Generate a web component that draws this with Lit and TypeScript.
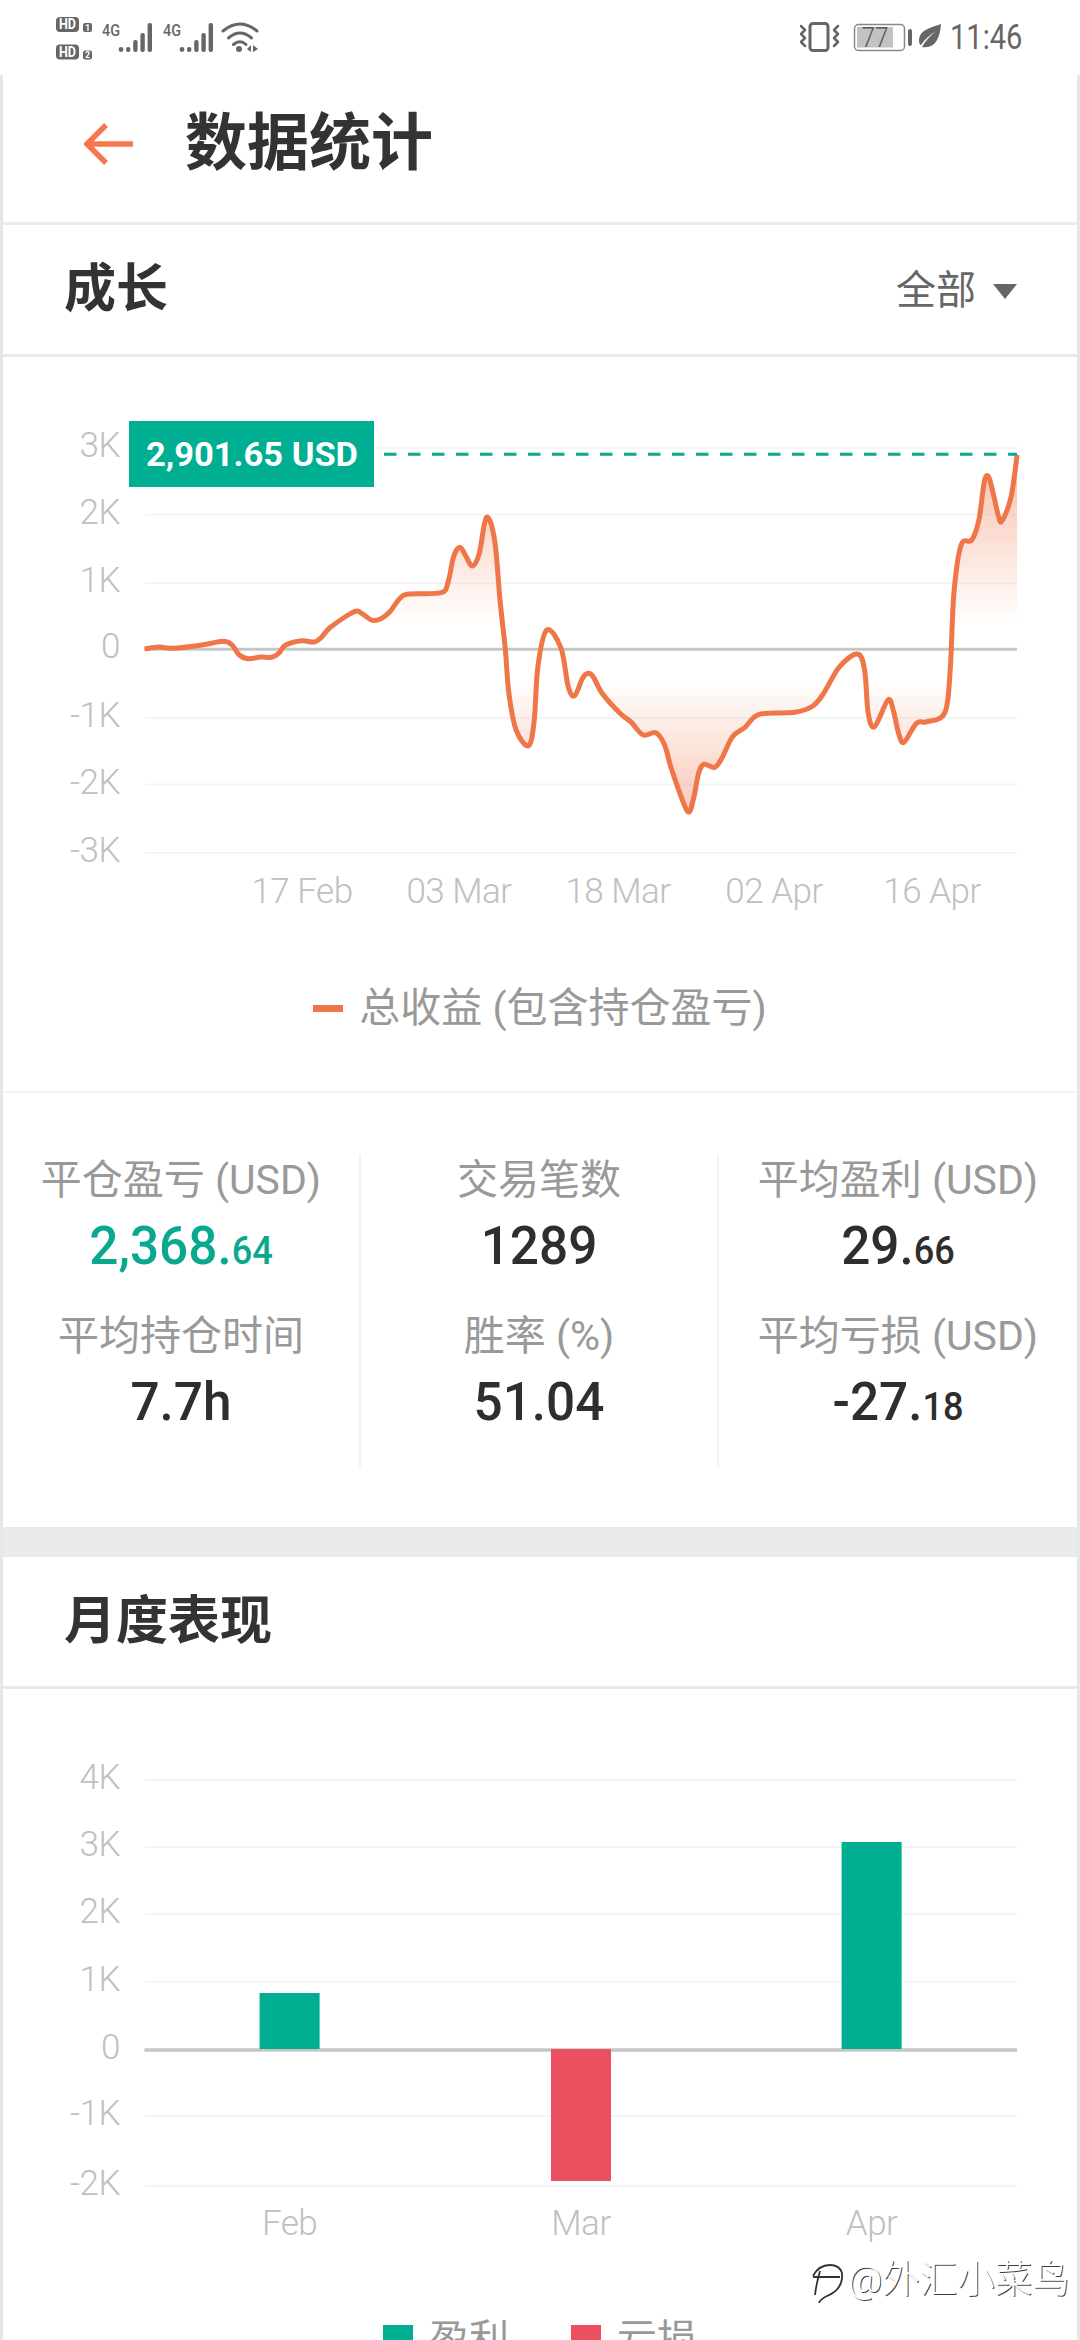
import { css, html, LitElement, svg } from "lit";
import { customElement } from "lit/decorators.js";

const ORANGE = "#ee7649";
const GREEN = "#00ae91";
const RED = "#ec4f60";

// curve samples, read off the two zoomed crops of the chart
const LEFT: number[][] = [
  [405, 747], [445, 741], [485, 745], [560, 736], [625, 724], [650, 735], [670, 765], [695, 776],
  [730, 771], [760, 772], [780, 760], [800, 735], [845, 722], [880, 726], [900, 712], [925, 682],
  [990, 636], [1010, 638], [1040, 660], [1065, 657], [1090, 637], [1120, 595], [1145, 582], [1235, 578],
  [1255, 545], [1270, 470], [1288, 442], [1305, 470], [1323, 498], [1342, 460], [1362, 352], [1385, 420],
  [1400, 600], [1415, 750], [1425, 880], [1445, 990], [1480, 1037],
];
const RIGHT: number[][] = [
  [40, 960], [50, 800], [75, 690], [115, 745], [135, 860], [153, 887], [175, 835], [190, 820],
  [205, 830], [230, 880], [280, 940], [310, 965], [345, 1005], [380, 998], [405, 1035], [425, 1110],
  [468, 1232], [485, 1200], [500, 1120], [515, 1093], [545, 1102], [565, 1075], [595, 1010], [630, 982],
  [670, 943], [770, 937], [820, 918], [850, 880], [895, 800], [945, 762], [965, 810], [975, 940],
  [993, 980], [1030, 900], [1045, 930], [1060, 1000], [1075, 1027], [1110, 970], [1140, 965], [1190, 937],
  [1205, 800], [1215, 580], [1235, 435], [1265, 420], [1285, 360], [1300, 245], [1312, 230], [1325, 280],
  [1340, 350], [1350, 362], [1375, 290], [1392, 165],
];
const CURVE = [
  ...LEFT.map(([x, y]) => [x / 2.8, y / 3 + 400]),
  ...RIGHT.map(([x, y]) => [x / 2.8 + 520, y / 3 + 400]),
];

function smooth(pts: number[][]): string {
  let d = `M${pts[0][0].toFixed(1)} ${pts[0][1].toFixed(1)}`;
  for (let i = 0; i < pts.length - 1; i++) {
    const p0 = pts[i - 1] || pts[i];
    const p1 = pts[i];
    const p2 = pts[i + 1];
    const p3 = pts[i + 2] || p2;
    const c1x = p1[0] + (p2[0] - p0[0]) / 6;
    const c1y = p1[1] + (p2[1] - p0[1]) / 6;
    const c2x = p2[0] - (p3[0] - p1[0]) / 6;
    const c2y = p2[1] - (p3[1] - p1[1]) / 6;
    d += `C${c1x.toFixed(1)} ${c1y.toFixed(1)} ${c2x.toFixed(1)} ${c2y.toFixed(1)} ${p2[0].toFixed(1)} ${p2[1].toFixed(1)}`;
  }
  return d;
}

const GROWTH_TICKS: [string, number][] = [
  ["3K", 447.7], ["2K", 514.5], ["1K", 583], ["0", 649.3], ["-1K", 718], ["-2K", 784.5], ["-3K", 853],
];
const GROWTH_DATES: [string, number][] = [
  ["17 Feb", 302], ["03 Mar", 459], ["18 Mar", 618], ["02 Apr", 774], ["16 Apr", 932],
];
const MONTH_TICKS: [string, number][] = [
  ["4K", 1780], ["3K", 1847], ["2K", 1914], ["1K", 1981.7], ["0", 2050], ["-1K", 2116], ["-2K", 2185.7],
];
const MONTHS = [
  { name: "Feb", x: 259.6, top: 1993, bottom: 2049, color: GREEN },
  { name: "Mar", x: 551, top: 2049, bottom: 2181, color: RED },
  { name: "Apr", x: 841.6, top: 1842, bottom: 2049, color: GREEN },
];

interface Stat {
  label: string;
  value: string;
  cents?: string;
  green?: boolean;
}

const STATS: Stat[][] = [
  [
    { label: "平仓盈亏 (USD)", value: "2,368.", cents: "64", green: true },
    { label: "平均持仓时间", value: "7.7h" },
  ],
  [
    { label: "交易笔数", value: "1289" },
    { label: "胜率 (%)", value: "51.04" },
  ],
  [
    { label: "平均盈利 (USD)", value: "29.", cents: "66" },
    { label: "平均亏损 (USD)", value: "-27.", cents: "18" },
  ],
];

function signal(x: number) {
  const tops = [47, 40, 33, 23];
  return svg`
    <circle cx=${x} cy="49.5" r="2.4" fill="#666"></circle>
    ${tops.map(
      (t, i) => svg`<rect x=${x + 5 + i * 7.2} y=${t} width="4.4" height=${52 - t} rx="2" fill="#666"></rect>`
    )}
  `;
}

function hdBadge(y: number, n: string) {
  return svg`
    <rect x="56" y=${y} width="23" height="15" rx="4" fill="#666"></rect>
    <text class="hd" x="67.5" y=${y + 12} text-anchor="middle" textLength="17" lengthAdjust="spacingAndGlyphs">HD</text>
    <rect x="83" y=${y + 6} width="9" height="9" rx="2" fill="#666"></rect>
    <text class="hd small" x="87.5" y=${y + 13.5} text-anchor="middle">${n}</text>
  `;
}

@customElement("app-root")
export class AppRoot extends LitElement {
  static styles = css`
    :host {
      display: block;
      position: relative;
      width: 1080px;
      height: 2340px;
      overflow: hidden;
      background: #fff;
      color: #333;
      font-family: Roboto, "Noto Sans CJK SC", sans-serif;
    }
    svg {
      display: block;
    }
    .status {
      height: 75px;
      display: flex;
      justify-content: space-between;
      align-items: flex-start;
      padding: 10px 58px 0 50px;
      box-sizing: border-box;
    }
    .status-right {
      display: flex;
      align-items: flex-start;
      margin-top: 5px;
    }
    .time {
      width: 72px;
      margin-left: 5px;
      font-size: 35px;
      line-height: 45px;
      color: #666;
      white-space: nowrap;
      transform-origin: left center;
      transform: scaleX(0.83);
    }
    .page {
      border-left: 3px solid #e6e6e6;
      border-right: 3px solid #e6e6e6;
    }
    .appbar {
      height: 137px;
      display: flex;
      align-items: center;
      padding: 0 0 10px 81px;
      border-bottom: 3px solid #ebebeb;
    }
    .appbar h1 {
      margin: 0 0 0 51px;
      font-size: 62px;
      line-height: 1;
      font-weight: 700;
      color: #333;
    }
    .head {
      height: 129px;
      display: flex;
      align-items: center;
      justify-content: space-between;
      padding: 0 60px 0 61px;
      border-bottom: 3px solid #e9e9e9;
    }
    .head h2 {
      margin: 0;
      font-size: 52px;
      line-height: 1;
      font-weight: 700;
      color: #333;
    }
    .filter {
      display: flex;
      align-items: center;
      gap: 17px;
      margin-bottom: 6px;
      font-size: 40px;
      color: #666;
    }
    .caret {
      width: 0;
      height: 0;
      border-left: 12px solid transparent;
      border-right: 12px solid transparent;
      border-top: 15px solid #666;
      margin-top: 10px;
    }
    .axis {
      font-size: 35px;
      fill: #c0c0c0;
      font-weight: 300;
      letter-spacing: -0.5px;
    }
    .tag {
      font-size: 34px;
      font-weight: 700;
      fill: #fff;
    }
    .hd {
      font-size: 14px;
      font-weight: 700;
      fill: #fff;
    }
    .hd.small {
      font-size: 9px;
    }
    .net {
      font-size: 17px;
      font-weight: 500;
      fill: #666;
    }
    .batt {
      font-size: 27px;
      font-weight: 300;
      fill: #555;
    }
    .series {
      height: 166px;
      display: flex;
      align-items: center;
      justify-content: center;
      gap: 16px;
      border-bottom: 2px solid #f3f3f3;
      font-size: 41px;
      line-height: 50px;
      color: #999;
    }
    .dash {
      width: 30px;
      height: 7px;
      background: #ee7649;
    }
    .stats {
      display: grid;
      grid-template-columns: repeat(3, 1fr);
      padding: 62px 0 60px;
    }
    .col {
      display: flex;
      flex-direction: column;
      gap: 24px;
      height: 312px;
      text-align: center;
      border-right: 2px solid #f2f2f2;
    }
    .col:last-child {
      border-right: 0;
    }
    .label {
      font-size: 41px;
      line-height: 50px;
      color: #999;
      white-space: nowrap;
    }
    .value {
      height: 82px;
      font-size: 54px;
      line-height: 82px;
      font-weight: 500;
      color: #2e2e2e;
      white-space: nowrap;
      transform: scaleX(0.95);
    }
    .value.green {
      color: #0aa88e;
    }
    .value small {
      font-size: 38px;
      line-height: 1;
    }
    .band {
      height: 30px;
      background: #e9eaec;
    }
    .legend {
      display: flex;
      justify-content: center;
      align-items: center;
      gap: 62px;
      padding-top: 26px;
      font-size: 40px;
      line-height: 50px;
      color: #999;
    }
    .legend-item {
      display: flex;
      align-items: center;
      gap: 16px;
    }
    .swatch {
      width: 30px;
      height: 30px;
    }
    .swatch.gain {
      background: #00ae91;
    }
    .swatch.loss {
      background: #ec4f60;
    }
    .watermark {
      position: absolute;
      left: 811px;
      top: 2258px;
      display: flex;
      align-items: flex-start;
      gap: 3px;
      font-size: 37.5px;
      line-height: 42px;
      font-weight: 300;
      color: #fff;
      white-space: nowrap;
      text-shadow: 1px 0.5px 0 rgba(0, 0, 0, 0.75);
    }
    .watermark svg {
      margin-top: 6px;
    }
  `;

  renderStatusLeft() {
    return html`
      <svg width="220" height="55" viewBox="50 10 220 55">
        ${hdBadge(17, "1")} ${hdBadge(44.5, "2")}
        <text class="net" x="102" y="36" textLength="18" lengthAdjust="spacingAndGlyphs">4G</text>
        ${signal(121)}
        <text class="net" x="163" y="36" textLength="18" lengthAdjust="spacingAndGlyphs">4G</text>
        ${signal(182)}
        <g fill="none" stroke="#666" stroke-width="3" stroke-linecap="round">
          <path d="M223 31Q240 17 257 31"></path>
          <path d="M228.5 38Q240 28 251.5 38"></path>
          <path d="M233.5 44.5Q240 39 246 44.5"></path>
        </g>
        <circle cx="239" cy="49" r="3" fill="#666"></circle>
        <path d="M247 49l4-4v7zM253 45v7l5-3z" fill="#666"></path>
      </svg>
    `;
  }

  renderStatusRight() {
    return html`
      <div class="status-right">
        <svg width="145" height="45" viewBox="800 15 145 45">
          <rect x="810" y="23.5" width="18" height="27" rx="3" fill="none" stroke="#666" stroke-width="3"></rect>
          <g fill="none" stroke="#666" stroke-width="2.5" stroke-linecap="round" stroke-linejoin="round">
            <path d="M801 26l4 4-4 4 4 4-4 4 4 4"></path>
            <path d="M838 26l-4 4 4 4-4 4 4 4-4 4"></path>
          </g>
          <rect x="854.5" y="24.5" width="50" height="26" rx="4" fill="none" stroke="#888" stroke-width="1.5"></rect>
          <rect x="857" y="27" width="36" height="20.5" fill="#c2c2c2"></rect>
          <text class="batt" x="875" y="47" text-anchor="middle" textLength="27" lengthAdjust="spacingAndGlyphs">77</text>
          <rect x="908" y="29" width="4" height="17" rx="2" fill="#666"></rect>
          <path
            d="M941 24C930 28 919 30 919 41C919 43 920 45 921 45C925 39 930 35 936 31C930 36 925 41 922 47C934 49 940 40 941 24Z"
            fill="#666"
          ></path>
        </svg>
        <div class="time">11:46</div>
      </div>
    `;
  }

  renderGrowth() {
    const line = smooth(CURVE);
    const first = CURVE[0];
    const last = CURVE[CURVE.length - 1];
    const area = `${line}L${last[0].toFixed(1)} 649.3L${first[0].toFixed(1)} 649.3Z`;
    return html`
      <svg width="1074" height="568" viewBox="3 357 1074 568">
        <defs>
          <linearGradient id="profit" gradientUnits="userSpaceOnUse" x1="0" y1="450" x2="0" y2="830">
            <stop offset="0" stop-color=${ORANGE} stop-opacity="0.48"></stop>
            <stop offset="0.46" stop-color=${ORANGE} stop-opacity="0"></stop>
            <stop offset="0.6" stop-color=${ORANGE} stop-opacity="0"></stop>
            <stop offset="1" stop-color=${ORANGE} stop-opacity="0.45"></stop>
          </linearGradient>
        </defs>
        ${GROWTH_TICKS.map(
          ([label, y]) => svg`
            <line
              x1="144.5"
              x2="1017"
              y1=${y}
              y2=${y}
              stroke=${label === "0" ? "#c6c6c6" : "#f5f5f5"}
              stroke-width=${label === "0" ? 3 : 2}
            ></line>
            <text class="axis" x="120" y=${y + 9} text-anchor="end">${label}</text>
          `
        )}
        ${GROWTH_DATES.map(
          ([label, x]) => svg`<text class="axis" x=${x} y="903" text-anchor="middle">${label}</text>`
        )}
        <path d=${area} fill="url(#profit)"></path>
        <path d=${line} fill="none" stroke=${ORANGE} stroke-width="5" stroke-linejoin="round"></path>
        <line
          x1="384"
          x2="1017"
          y1="454.3"
          y2="454.3"
          stroke="#10a58e"
          stroke-width="3"
          stroke-dasharray="12.5 11.5"
        ></line>
        <rect x="129" y="421" width="245" height="66" fill=${GREEN}></rect>
        <text class="tag" x="146" y="466" textLength="212" lengthAdjust="spacingAndGlyphs">2,901.65 USD</text>
      </svg>
    `;
  }

  renderMonthly() {
    return html`
      <svg width="1074" height="600" viewBox="3 1689 1074 600">
        ${MONTH_TICKS.map(
          ([label, y]) => svg`
            <line
              x1="144.5"
              x2="1017"
              y1=${y}
              y2=${y}
              stroke=${label === "0" ? "#c6c6c6" : "#f5f5f5"}
              stroke-width=${label === "0" ? 3.5 : 2}
            ></line>
            <text class="axis" x="120" y=${y + 9} text-anchor="end">${label}</text>
          `
        )}
        ${MONTHS.map(
          (m) => svg`
            <rect x=${m.x} y=${m.top} width="60" height=${m.bottom - m.top} fill=${m.color}></rect>
            <text class="axis" x=${m.x + 30} y="2235" text-anchor="middle">${m.name}</text>
          `
        )}
      </svg>
    `;
  }

  render() {
    return html`
      <div class="status">${this.renderStatusLeft()} ${this.renderStatusRight()}</div>
      <div class="page">
        <div class="appbar">
          <svg width="50" height="42" viewBox="0 0 50 42">
            <path d="M49 21H4M22 2L3 21l19 19" fill="none" stroke="#f4784a" stroke-width="5.5"></path>
          </svg>
          <h1>数据统计</h1>
        </div>
        <div class="head">
          <h2>成长</h2>
          <div class="filter">全部<span class="caret"></span></div>
        </div>
        ${this.renderGrowth()}
        <div class="series"><span class="dash"></span>总收益 (包含持仓盈亏)</div>
        <div class="stats">
          ${STATS.map(
            (col) => html`
              <div class="col">
                ${col.map(
                  (s) => html`
                    <div>
                      <div class="label">${s.label}</div>
                      <div class="value ${s.green ? "green" : ""}">
                        ${s.value}${s.cents ? html`<small>${s.cents}</small>` : ""}
                      </div>
                    </div>
                  `
                )}
              </div>
            `
          )}
        </div>
        <div class="band"></div>
        <div class="head"><h2>月度表现</h2></div>
        ${this.renderMonthly()}
        <div class="legend">
          <div class="legend-item"><span class="swatch gain"></span>盈利</div>
          <div class="legend-item"><span class="swatch loss"></span>亏损</div>
        </div>
      </div>
      <div class="watermark">
        <svg width="34" height="40" viewBox="0 0 34 40">
          <path
            d="M2 12C6 4 12 1 19 1C25 1 30 4 31 9C32 20 26 28 16 32C12 34 9 36 8 39M2 13H29M9 7C7 14 5 22 4 31"
            fill="none"
            stroke="#333"
            stroke-width="1.8"
          ></path>
        </svg>
        <span>@外汇小菜鸟</span>
      </div>
    `;
  }
}
